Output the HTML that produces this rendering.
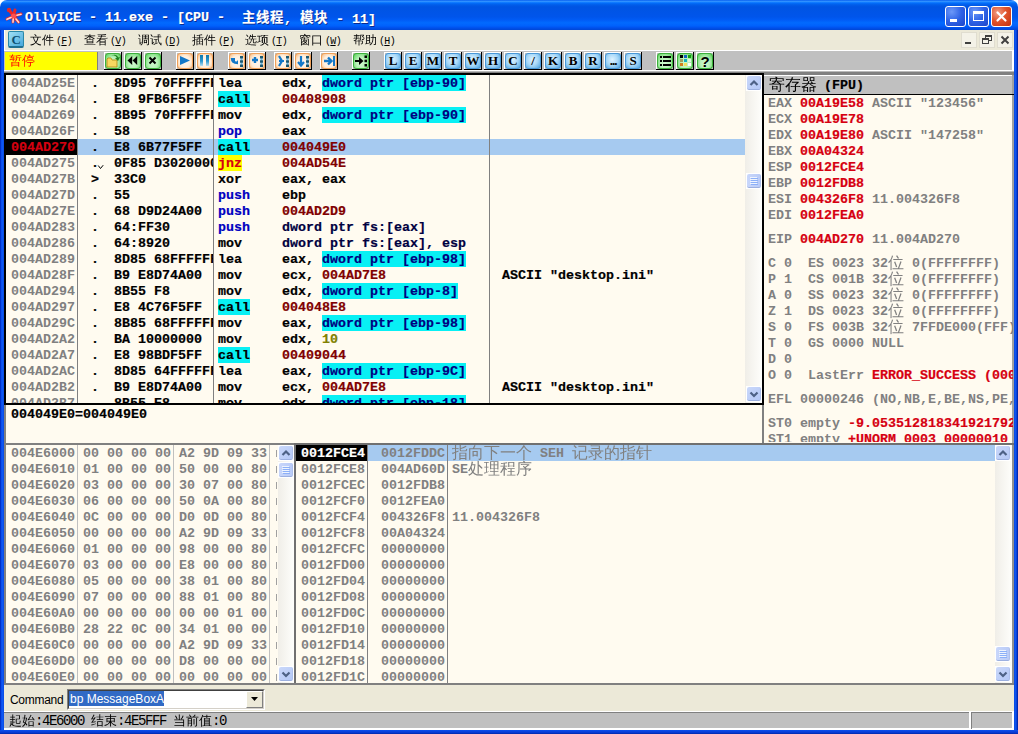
<!DOCTYPE html>
<html><head><meta charset="utf-8"><title>OllyICE</title><style>
html,body{margin:0;padding:0}
body{width:1018px;height:734px;position:relative;overflow:hidden;background:#0A3EDC;font-family:"Liberation Sans","WenQuanYi Zen Hei","Noto Sans CJK SC",sans-serif;font-size:12px;color:#000}
div,span{position:absolute;box-sizing:border-box;white-space:pre}
.m{font-family:"Liberation Mono","WenQuanYi Zen Hei Mono","Noto Sans CJK SC",monospace;font-weight:bold;font-size:13.333px;line-height:18px;height:16px;-webkit-text-stroke:0.2px}
.r{left:0;height:16px;width:100%}
.g{color:#808080;-webkit-text-stroke:0}
.k{color:#000}
.rd{color:#D60010}
.cy{background:#08F0F4}
.nvd{color:#000040}
.nv{color:#000080}
.mr{color:#800000}
.bl{color:#0000C0}
.ol{color:#808000}
.cream{background:#FFFBF0}
.cj{font-family:"WenQuanYi Zen Hei","Noto Sans CJK SC",sans-serif;font-weight:normal}
</style></head><body>
<div style="left:0px;top:0px;width:1018px;height:8px;background:#fff"></div>
<div style="left:0px;top:0px;width:1018px;height:30px;background:linear-gradient(to bottom,#0058EE 0%,#3593FF 4%,#288EFF 6%,#127DFF 8%,#036FFC 10%,#0262EE 14%,#0057E5 20%,#0054E3 24%,#0055EB 56%,#005BF5 66%,#026AFE 76%,#0061FC 86%,#0052EE 92%,#0046D5 100%);border-radius:7px 7px 0 0;"></div>
<svg style="position:absolute;left:0px;top:0px" width="30" height="30" viewBox="0 0 30 30"><g stroke="#E82828" stroke-width="3" stroke-linecap="round" fill="none"><line x1="13.5" y1="16" x2="9.5" y2="10.5"/><line x1="13.5" y1="16" x2="15" y2="10"/><line x1="13.5" y1="16" x2="21" y2="14"/><line x1="13.5" y1="16" x2="18.5" y2="22"/><line x1="13.5" y1="16" x2="13" y2="22"/><line x1="13.5" y1="16" x2="7" y2="19"/></g><circle cx="9" cy="10" r="2.2" fill="#E82828"/><circle cx="13.5" cy="16" r="2.5" fill="#FF5050"/><g stroke="#FFD8D0" stroke-width="1.6" stroke-linecap="round"><line x1="11" y1="17.5" x2="7" y2="19.3"/><line x1="13.2" y1="19" x2="13" y2="22.3"/><line x1="16" y1="19" x2="18.6" y2="22.3"/><line x1="17" y1="15.3" x2="21" y2="14.2"/></g></svg>
<span class="m" style="left:25px;top:9px;color:#fff;text-shadow:1px 1px 0 #0A2A90">OllyICE - 11.exe - [CPU - </span>
<span class="m" style="left:242px;top:9px;color:#fff;text-shadow:1px 1px 0 #0A2A90"><span style="position:relative;top:-1.5px;font-family:'Noto Sans CJK SC',sans-serif;letter-spacing:0.67px">主线程</span>, <span style="position:relative;top:-1.5px;font-family:'Noto Sans CJK SC',sans-serif;letter-spacing:0.67px">模块</span> - 11]</span>
<div style="left:945px;top:6px;width:21px;height:21px;background:radial-gradient(circle at 30% 25%,#6C98F8 0%,#2E62E6 50%,#1B45C8 100%);border:1px solid #fff;border-radius:3px"></div>
<div style="left:968px;top:6px;width:21px;height:21px;background:radial-gradient(circle at 30% 25%,#6C98F8 0%,#2E62E6 50%,#1B45C8 100%);border:1px solid #fff;border-radius:3px"></div>
<div style="left:991px;top:6px;width:21px;height:21px;background:radial-gradient(circle at 30% 30%,#F0A088 0%,#E0542C 45%,#C03010 100%);border:1px solid #fff;border-radius:3px"></div>
<div style="left:950px;top:19px;width:7px;height:3px;background:#fff"></div>
<div style="left:973px;top:11px;width:11px;height:10px;border:1px solid #fff;border-top:3px solid #fff"></div>
<svg style="position:absolute;left:995px;top:10px" width="13" height="13" viewBox="0 0 13 13"><path d="M2.5 2.5 L10.5 10.5 M10.5 2.5 L2.5 10.5" stroke="#fff" stroke-width="2.2" stroke-linecap="round"/></svg>
<div style="left:0px;top:30px;width:1px;height:704px;background:#0030C8"></div>
<div style="left:1px;top:30px;width:3px;height:700px;background:linear-gradient(to right,#0A48E8,#0C58F4,#0A48E0)"></div>
<div style="left:1014px;top:30px;width:3px;height:700px;background:linear-gradient(to right,#0A48E0,#0C54EE,#0838D0)"></div>
<div style="left:1017px;top:30px;width:1px;height:704px;background:#0028B0"></div>
<div style="left:0px;top:730px;width:1018px;height:4px;background:linear-gradient(to bottom,#0C50EC,#0A44E0,#0838D0,#0028A8)"></div>
<div style="left:4px;top:30px;width:1010px;height:21px;background:#ECE9D8"></div>
<div style="left:4px;top:50px;width:1010px;height:1px;background:#fff"></div>
<div style="left:8px;top:31px;width:16px;height:17px;background:linear-gradient(135deg,#A0E0F4,#48A8DC);border:1px solid #2888A8;border-bottom:2px solid #207090;border-radius:2px"></div>
<span class="" style="left:11.5px;top:32px;font-family:'Liberation Serif',serif;font-weight:bold;font-size:13px;line-height:16px;color:#0C5070">C</span>
<span class="cj" style="left:30px;top:33px;font-size:12px;line-height:14px;color:#000">文件<span style="position:static;font-family:'Liberation Mono',monospace;font-size:10px;margin-left:2px;letter-spacing:-0.7px">(<u>F</u>)</span></span>
<span class="cj" style="left:84px;top:33px;font-size:12px;line-height:14px;color:#000">查看<span style="position:static;font-family:'Liberation Mono',monospace;font-size:10px;margin-left:2px;letter-spacing:-0.7px">(<u>V</u>)</span></span>
<span class="cj" style="left:138px;top:33px;font-size:12px;line-height:14px;color:#000">调试<span style="position:static;font-family:'Liberation Mono',monospace;font-size:10px;margin-left:2px;letter-spacing:-0.7px">(<u>D</u>)</span></span>
<span class="cj" style="left:192px;top:33px;font-size:12px;line-height:14px;color:#000">插件<span style="position:static;font-family:'Liberation Mono',monospace;font-size:10px;margin-left:2px;letter-spacing:-0.7px">(<u>P</u>)</span></span>
<span class="cj" style="left:245px;top:33px;font-size:12px;line-height:14px;color:#000">选项<span style="position:static;font-family:'Liberation Mono',monospace;font-size:10px;margin-left:2px;letter-spacing:-0.7px">(<u>T</u>)</span></span>
<span class="cj" style="left:299px;top:33px;font-size:12px;line-height:14px;color:#000">窗口<span style="position:static;font-family:'Liberation Mono',monospace;font-size:10px;margin-left:2px;letter-spacing:-0.7px">(<u>W</u>)</span></span>
<span class="cj" style="left:353px;top:33px;font-size:12px;line-height:14px;color:#000">帮助<span style="position:static;font-family:'Liberation Mono',monospace;font-size:10px;margin-left:2px;letter-spacing:-0.7px">(<u>H</u>)</span></span>
<div style="left:961px;top:32px;width:16px;height:16px;background:#F4F2E8;border:1px solid #E0DDD0"></div>
<div style="left:979px;top:32px;width:16px;height:16px;background:#F4F2E8;border:1px solid #E0DDD0"></div>
<div style="left:997px;top:32px;width:16px;height:16px;background:#F4F2E8;border:1px solid #E0DDD0"></div>
<div style="left:965px;top:42px;width:6px;height:2px;background:#404040"></div>
<div style="left:985px;top:35px;width:7px;height:6px;border:1px solid #404040;border-top:2px solid #404040"></div>
<div style="left:982px;top:38px;width:7px;height:6px;border:1px solid #404040;border-top:2px solid #404040;background:#F4F2E8"></div>
<svg style="position:absolute;left:1000px;top:35px" width="10" height="10" viewBox="0 0 10 10"><path d="M1.5 1.5 L8.5 8.5 M8.5 1.5 L1.5 8.5" stroke="#404040" stroke-width="2"/></svg>
<div style="left:4px;top:30px;width:1px;height:42px;background:#fff"></div>
<div style="left:4px;top:51px;width:1010px;height:19px;background:#C0C0C0"></div>
<div style="left:4px;top:70px;width:1010px;height:1px;background:#fff"></div>
<div style="left:4px;top:71px;width:1010px;height:1px;background:#B8B8B8"></div>
<div style="left:4px;top:72px;width:1010px;height:2px;background:#808080"></div>
<div style="left:5px;top:52px;width:93px;height:18px;background:#FFFF00;border-right:1px solid #808080"></div>
<span class="cj" style="left:9px;top:53px;font-size:13px;line-height:16px;color:#FF0000">暂停</span>
<div style="left:104px;top:52px;width:18px;height:18px;background:#000"></div><div style="left:104px;top:52px;width:17px;height:17px;background:#fff"></div><div style="left:105px;top:53px;width:16px;height:16px;background:#C0C0C0"></div><div style="left:105px;top:53px;width:16px;height:16px;background:radial-gradient(ellipse at 50% 65%,#D0F8D0 0%,#B8F2B8 45%,#7CDC7C 80%,#50C450 100%);border:1px solid #3CB03C;border-radius:3px"></div><svg style="position:absolute;left:105px;top:53px" width="16" height="16" viewBox="0 0 16 16"><path d="M2 6 L2 14 L12 14 L12 7 L7 7 L6 5 L3 5 Z" fill="#F8D860" stroke="#B89820" stroke-width="1"/><path d="M6 3 Q10 1 12 5 L10 5 L13 8 L15 4 L13.5 4.5 Q11 0 6 3 Z" fill="#208020"/></svg><div style="left:124px;top:52px;width:18px;height:18px;background:#000"></div><div style="left:124px;top:52px;width:17px;height:17px;background:#fff"></div><div style="left:125px;top:53px;width:16px;height:16px;background:#C0C0C0"></div><div style="left:125px;top:53px;width:16px;height:16px;background:radial-gradient(ellipse at 50% 65%,#D0F8D0 0%,#B8F2B8 45%,#7CDC7C 80%,#50C450 100%);border:1px solid #3CB03C;border-radius:3px"></div><svg style="position:absolute;left:125px;top:53px" width="16" height="16" viewBox="0 0 16 16"><path d="M7.2 3 L7.2 12 L2.5 7.5 Z M12.2 3 L12.2 12 L7.5 7.5 Z" fill="#000"/></svg><div style="left:144px;top:52px;width:18px;height:18px;background:#000"></div><div style="left:144px;top:52px;width:17px;height:17px;background:#fff"></div><div style="left:145px;top:53px;width:16px;height:16px;background:#C0C0C0"></div><div style="left:145px;top:53px;width:16px;height:16px;background:radial-gradient(ellipse at 50% 65%,#D0F8D0 0%,#B8F2B8 45%,#7CDC7C 80%,#50C450 100%);border:1px solid #3CB03C;border-radius:3px"></div><svg style="position:absolute;left:145px;top:53px" width="16" height="16" viewBox="0 0 16 16"><path d="M4.5 4.5 L10.5 10.5 M10.5 4.5 L4.5 10.5" stroke="#000" stroke-width="2"/></svg><div style="left:176px;top:52px;width:18px;height:18px;background:#000"></div><div style="left:176px;top:52px;width:17px;height:17px;background:#fff"></div><div style="left:177px;top:53px;width:16px;height:16px;background:#C0C0C0"></div><div style="left:177px;top:53px;width:16px;height:16px;background:radial-gradient(ellipse at 50% 55%,#FFF8F0 0%,#FFEEDC 55%,#FBCB9C 85%,#F5A862 100%);border:1px solid #F0A058;border-radius:3px"></div><svg style="position:absolute;left:177px;top:53px" width="16" height="16" viewBox="0 0 16 16"><path d="M3 3 L13 7.5 L3 12 Z" fill="#1478C8"/></svg><div style="left:196px;top:52px;width:18px;height:18px;background:#000"></div><div style="left:196px;top:52px;width:17px;height:17px;background:#fff"></div><div style="left:197px;top:53px;width:16px;height:16px;background:#C0C0C0"></div><div style="left:197px;top:53px;width:16px;height:16px;background:radial-gradient(ellipse at 50% 55%,#FFF8F0 0%,#FFEEDC 55%,#FBCB9C 85%,#F5A862 100%);border:1px solid #F0A058;border-radius:3px"></div><svg style="position:absolute;left:197px;top:53px" width="16" height="16" viewBox="0 0 16 16"><defs><linearGradient id="pg" x1="0" y1="0" x2="0" y2="1"><stop offset="0" stop-color="#0E78AC"/><stop offset="0.55" stop-color="#2C98D0"/><stop offset="1" stop-color="#BCE0F0"/></linearGradient></defs><rect x="3" y="2" width="3" height="11" fill="url(#pg)"/><rect x="9" y="2" width="3" height="11" fill="url(#pg)"/></svg><div style="left:228px;top:52px;width:18px;height:18px;background:#000"></div><div style="left:228px;top:52px;width:17px;height:17px;background:#fff"></div><div style="left:229px;top:53px;width:16px;height:16px;background:#C0C0C0"></div><div style="left:229px;top:53px;width:16px;height:16px;background:radial-gradient(ellipse at 50% 55%,#FFF8F0 0%,#FFEEDC 55%,#FBCB9C 85%,#F5A862 100%);border:1px solid #F0A058;border-radius:3px"></div><svg style="position:absolute;left:229px;top:53px" width="16" height="16" viewBox="0 0 16 16"><path d="M3 4 L6 4 L6 8 L9 8 L9 6 L6 9.5 L3 6 Z" fill="#1478C8" transform="translate(0,1)"/><path d="M3 5 Q3 10 9 10" stroke="#1478C8" stroke-width="2.5" fill="none"/><rect x="11.5" y="3" width="2" height="10" fill="#6CB8E4"/><rect x="11" y="3" width="3" height="2.4" fill="#1C5870"/><rect x="11" y="7.3" width="3" height="2.4" fill="#1C5870"/><rect x="11" y="11.6" width="3" height="2.4" fill="#1C5870"/></svg><div style="left:248px;top:52px;width:18px;height:18px;background:#000"></div><div style="left:248px;top:52px;width:17px;height:17px;background:#fff"></div><div style="left:249px;top:53px;width:16px;height:16px;background:#C0C0C0"></div><div style="left:249px;top:53px;width:16px;height:16px;background:radial-gradient(ellipse at 50% 55%,#FFF8F0 0%,#FFEEDC 55%,#FBCB9C 85%,#F5A862 100%);border:1px solid #F0A058;border-radius:3px"></div><svg style="position:absolute;left:249px;top:53px" width="16" height="16" viewBox="0 0 16 16"><path d="M3 7 L9 7 M6 4 L6 10" stroke="#1478C8" stroke-width="2.4"/><rect x="11.5" y="3" width="2" height="10" fill="#6CB8E4"/><rect x="11" y="3" width="3" height="2.4" fill="#1C5870"/><rect x="11" y="7.3" width="3" height="2.4" fill="#1C5870"/><rect x="11" y="11.6" width="3" height="2.4" fill="#1C5870"/></svg><div style="left:274px;top:52px;width:18px;height:18px;background:#000"></div><div style="left:274px;top:52px;width:17px;height:17px;background:#fff"></div><div style="left:275px;top:53px;width:16px;height:16px;background:#C0C0C0"></div><div style="left:275px;top:53px;width:16px;height:16px;background:radial-gradient(ellipse at 50% 55%,#FFF8F0 0%,#FFEEDC 55%,#FBCB9C 85%,#F5A862 100%);border:1px solid #F0A058;border-radius:3px"></div><svg style="position:absolute;left:275px;top:53px" width="16" height="16" viewBox="0 0 16 16"><path d="M4 3 L7 8 L4 13 M4 8 L9 8" stroke="#1478C8" stroke-width="2.2" fill="none"/><rect x="11.5" y="3" width="2" height="10" fill="#6CB8E4"/><rect x="11" y="3" width="3" height="2.4" fill="#1C5870"/><rect x="11" y="7.3" width="3" height="2.4" fill="#1C5870"/><rect x="11" y="11.6" width="3" height="2.4" fill="#1C5870"/></svg><div style="left:294px;top:52px;width:18px;height:18px;background:#000"></div><div style="left:294px;top:52px;width:17px;height:17px;background:#fff"></div><div style="left:295px;top:53px;width:16px;height:16px;background:#C0C0C0"></div><div style="left:295px;top:53px;width:16px;height:16px;background:radial-gradient(ellipse at 50% 55%,#FFF8F0 0%,#FFEEDC 55%,#FBCB9C 85%,#F5A862 100%);border:1px solid #F0A058;border-radius:3px"></div><svg style="position:absolute;left:295px;top:53px" width="16" height="16" viewBox="0 0 16 16"><path d="M6 3 L6 12 M3 9 L6 12.5 L9 9" stroke="#1478C8" stroke-width="2.2" fill="none"/><rect x="11.5" y="3" width="2" height="10" fill="#6CB8E4"/><rect x="11" y="3" width="3" height="2.4" fill="#1C5870"/><rect x="11" y="7.3" width="3" height="2.4" fill="#1C5870"/><rect x="11" y="11.6" width="3" height="2.4" fill="#1C5870"/></svg><div style="left:320px;top:52px;width:18px;height:18px;background:#000"></div><div style="left:320px;top:52px;width:17px;height:17px;background:#fff"></div><div style="left:321px;top:53px;width:16px;height:16px;background:#C0C0C0"></div><div style="left:321px;top:53px;width:16px;height:16px;background:radial-gradient(ellipse at 50% 55%,#FFF8F0 0%,#FFEEDC 55%,#FBCB9C 85%,#F5A862 100%);border:1px solid #F0A058;border-radius:3px"></div><svg style="position:absolute;left:321px;top:53px" width="16" height="16" viewBox="0 0 16 16"><path d="M3 8 L10 8 M7 4.5 L10.5 8 L7 11.5" stroke="#1478C8" stroke-width="2.4" fill="none"/><rect x="12" y="3" width="2" height="10" fill="#1478C8"/></svg><div style="left:352px;top:52px;width:18px;height:18px;background:#000"></div><div style="left:352px;top:52px;width:17px;height:17px;background:#fff"></div><div style="left:353px;top:53px;width:16px;height:16px;background:#C0C0C0"></div><div style="left:353px;top:53px;width:16px;height:16px;background:radial-gradient(ellipse at 50% 65%,#D0F8D0 0%,#B8F2B8 45%,#7CDC7C 80%,#50C450 100%);border:1px solid #3CB03C;border-radius:3px"></div><svg style="position:absolute;left:353px;top:53px" width="16" height="16" viewBox="0 0 16 16"><path d="M2 8 L8 8" stroke="#000" stroke-width="2"/><path d="M6 4 L10.5 8 L6 12 Z" fill="#000"/><rect x="11.5" y="2.5" width="2.5" height="2.5" fill="#000"/><rect x="11.5" y="6.7" width="2.5" height="2.5" fill="#000"/><rect x="11.5" y="11" width="2.5" height="2.5" fill="#000"/></svg><div style="left:384px;top:52px;width:18px;height:18px;background:#000"></div><div style="left:384px;top:52px;width:17px;height:17px;background:#fff"></div><div style="left:385px;top:53px;width:16px;height:16px;background:#C0C0C0"></div><div style="left:385px;top:53px;width:16px;height:16px;background:radial-gradient(ellipse at 45% 40%,#DFF3FF 0%,#A8D8F8 50%,#4FA4E0 100%);border:1px solid #4898D8;border-radius:3px"></div><span style="left:385px;top:53px;width:16px;height:16px;text-align:center;font-family:'Liberation Serif',serif;font-weight:bold;font-size:13px;line-height:15px;color:#000;letter-spacing:0px">L</span><div style="left:404px;top:52px;width:18px;height:18px;background:#000"></div><div style="left:404px;top:52px;width:17px;height:17px;background:#fff"></div><div style="left:405px;top:53px;width:16px;height:16px;background:#C0C0C0"></div><div style="left:405px;top:53px;width:16px;height:16px;background:radial-gradient(ellipse at 45% 40%,#DFF3FF 0%,#A8D8F8 50%,#4FA4E0 100%);border:1px solid #4898D8;border-radius:3px"></div><span style="left:405px;top:53px;width:16px;height:16px;text-align:center;font-family:'Liberation Serif',serif;font-weight:bold;font-size:13px;line-height:15px;color:#000;letter-spacing:0px">E</span><div style="left:424px;top:52px;width:18px;height:18px;background:#000"></div><div style="left:424px;top:52px;width:17px;height:17px;background:#fff"></div><div style="left:425px;top:53px;width:16px;height:16px;background:#C0C0C0"></div><div style="left:425px;top:53px;width:16px;height:16px;background:radial-gradient(ellipse at 45% 40%,#DFF3FF 0%,#A8D8F8 50%,#4FA4E0 100%);border:1px solid #4898D8;border-radius:3px"></div><span style="left:425px;top:53px;width:16px;height:16px;text-align:center;font-family:'Liberation Serif',serif;font-weight:bold;font-size:13px;line-height:15px;color:#000;letter-spacing:0px">M</span><div style="left:444px;top:52px;width:18px;height:18px;background:#000"></div><div style="left:444px;top:52px;width:17px;height:17px;background:#fff"></div><div style="left:445px;top:53px;width:16px;height:16px;background:#C0C0C0"></div><div style="left:445px;top:53px;width:16px;height:16px;background:radial-gradient(ellipse at 45% 40%,#DFF3FF 0%,#A8D8F8 50%,#4FA4E0 100%);border:1px solid #4898D8;border-radius:3px"></div><span style="left:445px;top:53px;width:16px;height:16px;text-align:center;font-family:'Liberation Serif',serif;font-weight:bold;font-size:13px;line-height:15px;color:#000;letter-spacing:0px">T</span><div style="left:464px;top:52px;width:18px;height:18px;background:#000"></div><div style="left:464px;top:52px;width:17px;height:17px;background:#fff"></div><div style="left:465px;top:53px;width:16px;height:16px;background:#C0C0C0"></div><div style="left:465px;top:53px;width:16px;height:16px;background:radial-gradient(ellipse at 45% 40%,#DFF3FF 0%,#A8D8F8 50%,#4FA4E0 100%);border:1px solid #4898D8;border-radius:3px"></div><span style="left:465px;top:53px;width:16px;height:16px;text-align:center;font-family:'Liberation Serif',serif;font-weight:bold;font-size:13px;line-height:15px;color:#000;letter-spacing:0px">W</span><div style="left:484px;top:52px;width:18px;height:18px;background:#000"></div><div style="left:484px;top:52px;width:17px;height:17px;background:#fff"></div><div style="left:485px;top:53px;width:16px;height:16px;background:#C0C0C0"></div><div style="left:485px;top:53px;width:16px;height:16px;background:radial-gradient(ellipse at 45% 40%,#DFF3FF 0%,#A8D8F8 50%,#4FA4E0 100%);border:1px solid #4898D8;border-radius:3px"></div><span style="left:485px;top:53px;width:16px;height:16px;text-align:center;font-family:'Liberation Serif',serif;font-weight:bold;font-size:13px;line-height:15px;color:#000;letter-spacing:0px">H</span><div style="left:504px;top:52px;width:18px;height:18px;background:#000"></div><div style="left:504px;top:52px;width:17px;height:17px;background:#fff"></div><div style="left:505px;top:53px;width:16px;height:16px;background:#C0C0C0"></div><div style="left:505px;top:53px;width:16px;height:16px;background:radial-gradient(ellipse at 45% 40%,#DFF3FF 0%,#A8D8F8 50%,#4FA4E0 100%);border:1px solid #4898D8;border-radius:3px"></div><span style="left:505px;top:53px;width:16px;height:16px;text-align:center;font-family:'Liberation Serif',serif;font-weight:bold;font-size:13px;line-height:15px;color:#000;letter-spacing:0px">C</span><div style="left:524px;top:52px;width:18px;height:18px;background:#000"></div><div style="left:524px;top:52px;width:17px;height:17px;background:#fff"></div><div style="left:525px;top:53px;width:16px;height:16px;background:#C0C0C0"></div><div style="left:525px;top:53px;width:16px;height:16px;background:radial-gradient(ellipse at 45% 40%,#DFF3FF 0%,#A8D8F8 50%,#4FA4E0 100%);border:1px solid #4898D8;border-radius:3px"></div><span style="left:525px;top:53px;width:16px;height:16px;text-align:center;font-family:'Liberation Serif',serif;font-weight:bold;font-size:13px;line-height:15px;color:#000;letter-spacing:0px">/</span><div style="left:544px;top:52px;width:18px;height:18px;background:#000"></div><div style="left:544px;top:52px;width:17px;height:17px;background:#fff"></div><div style="left:545px;top:53px;width:16px;height:16px;background:#C0C0C0"></div><div style="left:545px;top:53px;width:16px;height:16px;background:radial-gradient(ellipse at 45% 40%,#DFF3FF 0%,#A8D8F8 50%,#4FA4E0 100%);border:1px solid #4898D8;border-radius:3px"></div><span style="left:545px;top:53px;width:16px;height:16px;text-align:center;font-family:'Liberation Serif',serif;font-weight:bold;font-size:13px;line-height:15px;color:#000;letter-spacing:0px">K</span><div style="left:564px;top:52px;width:18px;height:18px;background:#000"></div><div style="left:564px;top:52px;width:17px;height:17px;background:#fff"></div><div style="left:565px;top:53px;width:16px;height:16px;background:#C0C0C0"></div><div style="left:565px;top:53px;width:16px;height:16px;background:radial-gradient(ellipse at 45% 40%,#DFF3FF 0%,#A8D8F8 50%,#4FA4E0 100%);border:1px solid #4898D8;border-radius:3px"></div><span style="left:565px;top:53px;width:16px;height:16px;text-align:center;font-family:'Liberation Serif',serif;font-weight:bold;font-size:13px;line-height:15px;color:#000;letter-spacing:0px">B</span><div style="left:584px;top:52px;width:18px;height:18px;background:#000"></div><div style="left:584px;top:52px;width:17px;height:17px;background:#fff"></div><div style="left:585px;top:53px;width:16px;height:16px;background:#C0C0C0"></div><div style="left:585px;top:53px;width:16px;height:16px;background:radial-gradient(ellipse at 45% 40%,#DFF3FF 0%,#A8D8F8 50%,#4FA4E0 100%);border:1px solid #4898D8;border-radius:3px"></div><span style="left:585px;top:53px;width:16px;height:16px;text-align:center;font-family:'Liberation Serif',serif;font-weight:bold;font-size:13px;line-height:15px;color:#000;letter-spacing:0px">R</span><div style="left:604px;top:52px;width:18px;height:18px;background:#000"></div><div style="left:604px;top:52px;width:17px;height:17px;background:#fff"></div><div style="left:605px;top:53px;width:16px;height:16px;background:#C0C0C0"></div><div style="left:605px;top:53px;width:16px;height:16px;background:radial-gradient(ellipse at 45% 40%,#DFF3FF 0%,#A8D8F8 50%,#4FA4E0 100%);border:1px solid #4898D8;border-radius:3px"></div><span style="left:605px;top:53px;width:16px;height:16px;text-align:center;font-family:'Liberation Serif',serif;font-weight:bold;font-size:13px;line-height:15px;color:#000;letter-spacing:-1px">...</span><div style="left:624px;top:52px;width:18px;height:18px;background:#000"></div><div style="left:624px;top:52px;width:17px;height:17px;background:#fff"></div><div style="left:625px;top:53px;width:16px;height:16px;background:#C0C0C0"></div><div style="left:625px;top:53px;width:16px;height:16px;background:radial-gradient(ellipse at 45% 40%,#DFF3FF 0%,#A8D8F8 50%,#4FA4E0 100%);border:1px solid #4898D8;border-radius:3px"></div><span style="left:625px;top:53px;width:16px;height:16px;text-align:center;font-family:'Liberation Serif',serif;font-weight:bold;font-size:13px;line-height:15px;color:#000;letter-spacing:0px">S</span><div style="left:656px;top:52px;width:18px;height:18px;background:#000"></div><div style="left:656px;top:52px;width:17px;height:17px;background:#fff"></div><div style="left:657px;top:53px;width:16px;height:16px;background:#C0C0C0"></div><div style="left:657px;top:53px;width:16px;height:16px;background:radial-gradient(ellipse at 50% 65%,#D0F8D0 0%,#B8F2B8 45%,#7CDC7C 80%,#50C450 100%);border:1px solid #3CB03C;border-radius:3px"></div><svg style="position:absolute;left:657px;top:53px" width="16" height="16" viewBox="0 0 16 16"><rect x="3" y="3" width="2" height="2" fill="#000"/><rect x="6" y="3" width="8" height="2" fill="#000"/><rect x="3" y="7" width="2" height="2" fill="#000"/><rect x="6" y="7" width="8" height="2" fill="#000"/><rect x="3" y="11" width="2" height="2" fill="#000"/><rect x="6" y="11" width="8" height="2" fill="#000"/></svg><div style="left:676px;top:52px;width:18px;height:18px;background:#000"></div><div style="left:676px;top:52px;width:17px;height:17px;background:#fff"></div><div style="left:677px;top:53px;width:16px;height:16px;background:#C0C0C0"></div><div style="left:677px;top:53px;width:16px;height:16px;background:radial-gradient(ellipse at 50% 65%,#D0F8D0 0%,#B8F2B8 45%,#7CDC7C 80%,#50C450 100%);border:1px solid #3CB03C;border-radius:3px"></div><svg style="position:absolute;left:677px;top:53px" width="16" height="16" viewBox="0 0 16 16"><rect x="3" y="2" width="3" height="3" fill="#000"/><rect x="7" y="2" width="3" height="3" fill="#1060C0"/><rect x="11" y="2" width="3" height="3" fill="#10A010"/><rect x="3" y="6" width="3" height="3" fill="#A0A060"/><rect x="7" y="6" width="3" height="3" fill="#10B0C0"/><rect x="11" y="6" width="3" height="3" fill="#E0F8E0"/><rect x="3" y="10" width="3" height="3" fill="#D08020"/><rect x="7" y="10" width="3" height="3" fill="#F0E060"/><rect x="11" y="10" width="3" height="3" fill="#FFFFFF"/></svg><div style="left:696px;top:52px;width:18px;height:18px;background:#000"></div><div style="left:696px;top:52px;width:17px;height:17px;background:#fff"></div><div style="left:697px;top:53px;width:16px;height:16px;background:#C0C0C0"></div><div style="left:697px;top:53px;width:16px;height:16px;background:radial-gradient(ellipse at 50% 65%,#D0F8D0 0%,#B8F2B8 45%,#7CDC7C 80%,#50C450 100%);border:1px solid #3CB03C;border-radius:3px"></div><span style="left:697px;top:53px;width:16px;height:16px;text-align:center;font-family:'Liberation Sans',sans-serif;font-weight:bold;font-size:15px;line-height:17px;color:#000">?</span>
<div style="left:1012px;top:51px;width:2px;height:19px;background:#fff"></div>
<div style="left:4px;top:74px;width:1010px;height:611px;background:#C0C0C0"></div>
<div style="left:4px;top:73px;width:760px;height:332px;background:#000"></div>
<div class="cream" style="left:6px;top:75px;width:756px;height:328px;"></div>
<div id="dis" style="left:6px;top:75px;width:739px;height:328px;overflow:hidden">
<span class="m g" style="left:5px;top:0px;">004AD25E</span>
<span class="m k" style="left:85px;top:0px;">.</span>
<span class="m k" style="left:108px;top:0px;width:99px;overflow:hidden">8D95 70FFFFFF</span>
<span class="m k" style="left:212px;top:0px;">lea</span>
<span class="m k" style="left:276px;top:0px;">edx, </span>
<span class="m nv" style="left:316px;top:0px;background:#08F0F4">dword ptr [ebp-90]</span>
<span class="m g" style="left:5px;top:16px;">004AD264</span>
<span class="m k" style="left:85px;top:16px;">.</span>
<span class="m k" style="left:108px;top:16px;width:99px;overflow:hidden">E8 9FB6F5FF</span>
<span class="m k" style="left:212px;top:16px;background:#08F0F4">call</span>
<span class="m mr" style="left:276px;top:16px;">00408908</span>
<span class="m g" style="left:5px;top:32px;">004AD269</span>
<span class="m k" style="left:85px;top:32px;">.</span>
<span class="m k" style="left:108px;top:32px;width:99px;overflow:hidden">8B95 70FFFFFF</span>
<span class="m k" style="left:212px;top:32px;">mov</span>
<span class="m k" style="left:276px;top:32px;">edx, </span>
<span class="m nv" style="left:316px;top:32px;background:#08F0F4">dword ptr [ebp-90]</span>
<span class="m g" style="left:5px;top:48px;">004AD26F</span>
<span class="m k" style="left:85px;top:48px;">.</span>
<span class="m k" style="left:108px;top:48px;width:99px;overflow:hidden">58</span>
<span class="m bl" style="left:212px;top:48px;">pop</span>
<span class="m k" style="left:276px;top:48px;">eax</span>
<div style="left:0px;top:64px;width:740px;height:16px;background:#A6CAF0"></div>
<div style="left:0px;top:64px;width:71px;height:16px;background:#000"></div>
<span class="m rd" style="left:5px;top:64px;">004AD270</span>
<span class="m k" style="left:85px;top:64px;">.</span>
<span class="m k" style="left:108px;top:64px;width:99px;overflow:hidden">E8 6B77F5FF</span>
<span class="m k" style="left:212px;top:64px;background:#08F0F4">call</span>
<span class="m mr" style="left:276px;top:64px;">004049E0</span>
<span class="m g" style="left:5px;top:80px;">004AD275</span>
<span class="m k" style="left:85px;top:80px;">.</span>
<svg style="position:absolute;left:91px;top:89px" width="8" height="6" viewBox="0 0 8 6"><path d="M1.2 1.5 L3.5 4.5 L6.2 1.2" stroke="#000" stroke-width="1" fill="none"/></svg>
<span class="m k" style="left:108px;top:80px;width:99px;overflow:hidden">0F85 D3020000</span>
<span class="m rd" style="left:212px;top:80px;background:#FFFF00">jnz</span>
<span class="m mr" style="left:276px;top:80px;">004AD54E</span>
<span class="m g" style="left:5px;top:96px;">004AD27B</span>
<span class="m k" style="left:85px;top:96px;">&gt;</span>
<span class="m k" style="left:108px;top:96px;width:99px;overflow:hidden">33C0</span>
<span class="m k" style="left:212px;top:96px;">xor</span>
<span class="m k" style="left:276px;top:96px;">eax, eax</span>
<span class="m g" style="left:5px;top:112px;">004AD27D</span>
<span class="m k" style="left:85px;top:112px;">.</span>
<span class="m k" style="left:108px;top:112px;width:99px;overflow:hidden">55</span>
<span class="m bl" style="left:212px;top:112px;">push</span>
<span class="m k" style="left:276px;top:112px;">ebp</span>
<span class="m g" style="left:5px;top:128px;">004AD27E</span>
<span class="m k" style="left:85px;top:128px;">.</span>
<span class="m k" style="left:108px;top:128px;width:99px;overflow:hidden">68 D9D24A00</span>
<span class="m bl" style="left:212px;top:128px;">push</span>
<span class="m mr" style="left:276px;top:128px;">004AD2D9</span>
<span class="m g" style="left:5px;top:144px;">004AD283</span>
<span class="m k" style="left:85px;top:144px;">.</span>
<span class="m k" style="left:108px;top:144px;width:99px;overflow:hidden">64:FF30</span>
<span class="m bl" style="left:212px;top:144px;">push</span>
<span class="m nvd" style="left:276px;top:144px;">dword ptr fs:[eax]</span>
<span class="m g" style="left:5px;top:160px;">004AD286</span>
<span class="m k" style="left:85px;top:160px;">.</span>
<span class="m k" style="left:108px;top:160px;width:99px;overflow:hidden">64:8920</span>
<span class="m k" style="left:212px;top:160px;">mov</span>
<span class="m nvd" style="left:276px;top:160px;">dword ptr fs:[eax], esp</span>
<span class="m g" style="left:5px;top:176px;">004AD289</span>
<span class="m k" style="left:85px;top:176px;">.</span>
<span class="m k" style="left:108px;top:176px;width:99px;overflow:hidden">8D85 68FFFFFF</span>
<span class="m k" style="left:212px;top:176px;">lea</span>
<span class="m k" style="left:276px;top:176px;">eax, </span>
<span class="m nv" style="left:316px;top:176px;background:#08F0F4">dword ptr [ebp-98]</span>
<span class="m g" style="left:5px;top:192px;">004AD28F</span>
<span class="m k" style="left:85px;top:192px;">.</span>
<span class="m k" style="left:108px;top:192px;width:99px;overflow:hidden">B9 E8D74A00</span>
<span class="m k" style="left:212px;top:192px;">mov</span>
<span class="m k" style="left:276px;top:192px;">ecx, </span>
<span class="m mr" style="left:316px;top:192px;">004AD7E8</span>
<span class="m k" style="left:496px;top:192px;">ASCII "desktop.ini"</span>
<span class="m g" style="left:5px;top:208px;">004AD294</span>
<span class="m k" style="left:85px;top:208px;">.</span>
<span class="m k" style="left:108px;top:208px;width:99px;overflow:hidden">8B55 F8</span>
<span class="m k" style="left:212px;top:208px;">mov</span>
<span class="m k" style="left:276px;top:208px;">edx, </span>
<span class="m nv" style="left:316px;top:208px;background:#08F0F4">dword ptr [ebp-8]</span>
<span class="m g" style="left:5px;top:224px;">004AD297</span>
<span class="m k" style="left:85px;top:224px;">.</span>
<span class="m k" style="left:108px;top:224px;width:99px;overflow:hidden">E8 4C76F5FF</span>
<span class="m k" style="left:212px;top:224px;background:#08F0F4">call</span>
<span class="m mr" style="left:276px;top:224px;">004048E8</span>
<span class="m g" style="left:5px;top:240px;">004AD29C</span>
<span class="m k" style="left:85px;top:240px;">.</span>
<span class="m k" style="left:108px;top:240px;width:99px;overflow:hidden">8B85 68FFFFFF</span>
<span class="m k" style="left:212px;top:240px;">mov</span>
<span class="m k" style="left:276px;top:240px;">eax, </span>
<span class="m nv" style="left:316px;top:240px;background:#08F0F4">dword ptr [ebp-98]</span>
<span class="m g" style="left:5px;top:256px;">004AD2A2</span>
<span class="m k" style="left:85px;top:256px;">.</span>
<span class="m k" style="left:108px;top:256px;width:99px;overflow:hidden">BA 10000000</span>
<span class="m k" style="left:212px;top:256px;">mov</span>
<span class="m k" style="left:276px;top:256px;">edx, </span>
<span class="m ol" style="left:316px;top:256px;">10</span>
<span class="m g" style="left:5px;top:272px;">004AD2A7</span>
<span class="m k" style="left:85px;top:272px;">.</span>
<span class="m k" style="left:108px;top:272px;width:99px;overflow:hidden">E8 98BDF5FF</span>
<span class="m k" style="left:212px;top:272px;background:#08F0F4">call</span>
<span class="m mr" style="left:276px;top:272px;">00409044</span>
<span class="m g" style="left:5px;top:288px;">004AD2AC</span>
<span class="m k" style="left:85px;top:288px;">.</span>
<span class="m k" style="left:108px;top:288px;width:99px;overflow:hidden">8D85 64FFFFFF</span>
<span class="m k" style="left:212px;top:288px;">lea</span>
<span class="m k" style="left:276px;top:288px;">eax, </span>
<span class="m nv" style="left:316px;top:288px;background:#08F0F4">dword ptr [ebp-9C]</span>
<span class="m g" style="left:5px;top:304px;">004AD2B2</span>
<span class="m k" style="left:85px;top:304px;">.</span>
<span class="m k" style="left:108px;top:304px;width:99px;overflow:hidden">B9 E8D74A00</span>
<span class="m k" style="left:212px;top:304px;">mov</span>
<span class="m k" style="left:276px;top:304px;">ecx, </span>
<span class="m mr" style="left:316px;top:304px;">004AD7E8</span>
<span class="m k" style="left:496px;top:304px;">ASCII "desktop.ini"</span>
<span class="m g" style="left:5px;top:320px;">004AD2B7</span>
<span class="m k" style="left:85px;top:320px;">.</span>
<span class="m k" style="left:108px;top:320px;width:99px;overflow:hidden">8B55 E8</span>
<span class="m k" style="left:212px;top:320px;">mov</span>
<span class="m k" style="left:276px;top:320px;">edx, </span>
<span class="m nv" style="left:316px;top:320px;background:#08F0F4">dword ptr [ebp-18]</span>
<div style="left:71px;top:0px;width:1px;height:329px;background:#808080"></div>
<div style="left:207px;top:0px;width:1px;height:329px;background:#808080"></div>
<div style="left:483px;top:0px;width:1px;height:329px;background:#808080"></div>
</div>
<div style="left:745px;top:75px;width:17px;height:328px;background:linear-gradient(to right,#F0EEE8,#FEFEFB)"></div>
<div style="left:4px;top:405px;width:760px;height:40px;background:#808080"></div>
<div class="cream" style="left:6px;top:405px;width:756px;height:38px;"></div>
<span class="m k" style="left:11px;top:406px;">004049E0=004049E0</span>
<div style="left:764px;top:72px;width:250px;height:372px;background:#808080"></div>
<div class="cream" style="left:764px;top:75px;width:250px;height:368px;"></div>
<div style="left:764px;top:75px;width:250px;height:19px;background:#C0C0C0;border-top:1px solid #fff"></div>
<div style="left:1012px;top:75px;width:2px;height:368px;background:#A0A0A0"></div>
<div style="left:764px;top:94px;width:250px;height:1px;background:#000"></div>
<span class="cj" style="left:769px;top:76px;font-size:16px;line-height:18px;color:#000">寄存器</span>
<span class="m k" style="left:824px;top:77px;">(FPU)</span>
<div style="left:766px;top:95px;width:247px;height:347px;overflow:hidden">
<span class="m g" style="left:2px;top:0px;">EAX</span>
<span class="m rd" style="left:34px;top:0px;">00A19E58</span>
<span class="m g" style="left:106px;top:0px;">ASCII "123456"</span>
<span class="m g" style="left:2px;top:16px;">ECX</span>
<span class="m rd" style="left:34px;top:16px;">00A19E78</span>
<span class="m g" style="left:2px;top:32px;">EDX</span>
<span class="m rd" style="left:34px;top:32px;">00A19E80</span>
<span class="m g" style="left:106px;top:32px;">ASCII "147258"</span>
<span class="m g" style="left:2px;top:48px;">EBX</span>
<span class="m rd" style="left:34px;top:48px;">00A04324</span>
<span class="m g" style="left:2px;top:64px;">ESP</span>
<span class="m rd" style="left:34px;top:64px;">0012FCE4</span>
<span class="m g" style="left:2px;top:80px;">EBP</span>
<span class="m rd" style="left:34px;top:80px;">0012FDB8</span>
<span class="m g" style="left:2px;top:96px;">ESI</span>
<span class="m rd" style="left:34px;top:96px;">004326F8</span>
<span class="m g" style="left:106px;top:96px;">11.004326F8</span>
<span class="m g" style="left:2px;top:112px;">EDI</span>
<span class="m rd" style="left:34px;top:112px;">0012FEA0</span>
<span class="m g" style="left:2px;top:136px;">EIP</span>
<span class="m rd" style="left:34px;top:136px;">004AD270</span>
<span class="m g" style="left:106px;top:136px;">11.004AD270</span>
<span class="m g" style="left:2px;top:160px;">C 0</span>
<span class="m g" style="left:42px;top:160px;">ES 0023 32</span>
<span class="cj g" style="left:122px;top:160px;font-size:16px;line-height:16px">位</span>
<span class="m g" style="left:138px;top:160px;"> 0(FFFFFFFF)</span>
<span class="m g" style="left:2px;top:176px;">P 1</span>
<span class="m g" style="left:42px;top:176px;">CS 001B 32</span>
<span class="cj g" style="left:122px;top:176px;font-size:16px;line-height:16px">位</span>
<span class="m g" style="left:138px;top:176px;"> 0(FFFFFFFF)</span>
<span class="m g" style="left:2px;top:192px;">A 0</span>
<span class="m g" style="left:42px;top:192px;">SS 0023 32</span>
<span class="cj g" style="left:122px;top:192px;font-size:16px;line-height:16px">位</span>
<span class="m g" style="left:138px;top:192px;"> 0(FFFFFFFF)</span>
<span class="m g" style="left:2px;top:208px;">Z 1</span>
<span class="m g" style="left:42px;top:208px;">DS 0023 32</span>
<span class="cj g" style="left:122px;top:208px;font-size:16px;line-height:16px">位</span>
<span class="m g" style="left:138px;top:208px;"> 0(FFFFFFFF)</span>
<span class="m g" style="left:2px;top:224px;">S 0</span>
<span class="m g" style="left:42px;top:224px;">FS 003B 32</span>
<span class="cj g" style="left:122px;top:224px;font-size:16px;line-height:16px">位</span>
<span class="m g" style="left:138px;top:224px;"> 7FFDE000(FFF)</span>
<span class="m g" style="left:2px;top:240px;">T 0</span>
<span class="m g" style="left:42px;top:240px;">GS 0000 NULL</span>
<span class="m g" style="left:2px;top:256px;">D 0</span>
<span class="m g" style="left:2px;top:272px;">O 0</span>
<span class="m g" style="left:42px;top:272px;">LastErr </span>
<span class="m rd" style="left:106px;top:272px;">ERROR_SUCCESS (00000000)</span>
<span class="m g" style="left:2px;top:296px;">EFL 00000246 (NO,NB,E,BE,NS,PE,GE,LE)</span>
<span class="m g" style="left:2px;top:320px;">ST0 empty </span>
<span class="m rd" style="left:82px;top:320px;">-9.0535128183419217920e-2085</span>
<span class="m g" style="left:2px;top:336px;">ST1 empty </span>
<span class="m rd" style="left:82px;top:336px;">+UNORM 0003 00000010 00000000</span>
</div>
<div style="left:4px;top:443px;width:290px;height:242px;background:#808080"></div>
<div class="cream" style="left:6px;top:445px;width:288px;height:239px;"></div>
<div style="left:6px;top:445px;width:272px;height:239px;overflow:hidden">
<span class="m g" style="left:5px;top:0px;">004E6000</span>
<span class="m g" style="left:77px;top:0px;">00 00 00 00</span>
<span class="m g" style="left:173px;top:0px;">A2 9D 09 33</span>
<div style="left:270px;top:5px;width:1px;height:7px;background:#A0A0A0"></div>
<span class="m g" style="left:5px;top:16px;">004E6010</span>
<span class="m g" style="left:77px;top:16px;">01 00 00 00</span>
<span class="m g" style="left:173px;top:16px;">50 00 00 80</span>
<div style="left:270px;top:21px;width:1px;height:7px;background:#A0A0A0"></div>
<span class="m g" style="left:5px;top:32px;">004E6020</span>
<span class="m g" style="left:77px;top:32px;">03 00 00 00</span>
<span class="m g" style="left:173px;top:32px;">30 07 00 80</span>
<div style="left:270px;top:37px;width:1px;height:7px;background:#A0A0A0"></div>
<span class="m g" style="left:5px;top:48px;">004E6030</span>
<span class="m g" style="left:77px;top:48px;">06 00 00 00</span>
<span class="m g" style="left:173px;top:48px;">50 0A 00 80</span>
<div style="left:270px;top:53px;width:1px;height:7px;background:#A0A0A0"></div>
<span class="m g" style="left:5px;top:64px;">004E6040</span>
<span class="m g" style="left:77px;top:64px;">0C 00 00 00</span>
<span class="m g" style="left:173px;top:64px;">D0 0D 00 80</span>
<div style="left:270px;top:69px;width:1px;height:7px;background:#A0A0A0"></div>
<span class="m g" style="left:5px;top:80px;">004E6050</span>
<span class="m g" style="left:77px;top:80px;">00 00 00 00</span>
<span class="m g" style="left:173px;top:80px;">A2 9D 09 33</span>
<div style="left:270px;top:85px;width:1px;height:7px;background:#A0A0A0"></div>
<span class="m g" style="left:5px;top:96px;">004E6060</span>
<span class="m g" style="left:77px;top:96px;">01 00 00 00</span>
<span class="m g" style="left:173px;top:96px;">98 00 00 80</span>
<div style="left:270px;top:101px;width:1px;height:7px;background:#A0A0A0"></div>
<span class="m g" style="left:5px;top:112px;">004E6070</span>
<span class="m g" style="left:77px;top:112px;">03 00 00 00</span>
<span class="m g" style="left:173px;top:112px;">E8 00 00 80</span>
<div style="left:270px;top:117px;width:1px;height:7px;background:#A0A0A0"></div>
<span class="m g" style="left:5px;top:128px;">004E6080</span>
<span class="m g" style="left:77px;top:128px;">05 00 00 00</span>
<span class="m g" style="left:173px;top:128px;">38 01 00 80</span>
<div style="left:270px;top:133px;width:1px;height:7px;background:#A0A0A0"></div>
<span class="m g" style="left:5px;top:144px;">004E6090</span>
<span class="m g" style="left:77px;top:144px;">07 00 00 00</span>
<span class="m g" style="left:173px;top:144px;">88 01 00 80</span>
<div style="left:270px;top:149px;width:1px;height:7px;background:#A0A0A0"></div>
<span class="m g" style="left:5px;top:160px;">004E60A0</span>
<span class="m g" style="left:77px;top:160px;">00 00 00 00</span>
<span class="m g" style="left:173px;top:160px;">00 00 01 00</span>
<div style="left:270px;top:165px;width:1px;height:7px;background:#A0A0A0"></div>
<span class="m g" style="left:5px;top:176px;">004E60B0</span>
<span class="m g" style="left:77px;top:176px;">28 22 0C 00</span>
<span class="m g" style="left:173px;top:176px;">34 01 00 00</span>
<div style="left:270px;top:181px;width:1px;height:7px;background:#A0A0A0"></div>
<span class="m g" style="left:5px;top:192px;">004E60C0</span>
<span class="m g" style="left:77px;top:192px;">00 00 00 00</span>
<span class="m g" style="left:173px;top:192px;">A2 9D 09 33</span>
<div style="left:270px;top:197px;width:1px;height:7px;background:#A0A0A0"></div>
<span class="m g" style="left:5px;top:208px;">004E60D0</span>
<span class="m g" style="left:77px;top:208px;">00 00 00 00</span>
<span class="m g" style="left:173px;top:208px;">D8 00 00 00</span>
<div style="left:270px;top:213px;width:1px;height:7px;background:#A0A0A0"></div>
<span class="m g" style="left:5px;top:224px;">004E60E0</span>
<span class="m g" style="left:77px;top:224px;">00 00 00 00</span>
<span class="m g" style="left:173px;top:224px;">00 00 00 00</span>
<div style="left:270px;top:229px;width:1px;height:7px;background:#A0A0A0"></div>
<div style="left:71px;top:0px;width:1px;height:239px;background:#C0C0C0"></div>
<div style="left:167px;top:0px;width:1px;height:239px;background:#C0C0C0"></div>
<div style="left:263px;top:0px;width:1px;height:239px;background:#C0C0C0"></div>
</div>
<div style="left:278px;top:445px;width:16px;height:239px;background:linear-gradient(to right,#F0EEE8,#FEFEFB)"></div>
<div style="left:294px;top:443px;width:720px;height:242px;background:#707070"></div>
<div class="cream" style="left:296px;top:445px;width:718px;height:239px;"></div>
<div style="left:296px;top:445px;width:699px;height:238px;overflow:hidden">
<div style="left:0px;top:0px;width:700px;height:16px;background:#A6CAF0"></div>
<div style="left:0px;top:0px;width:71px;height:16px;background:#000"></div>
<span class="m" style="left:5px;top:0px;color:#fff">0012FCE4</span>
<span class="m g" style="left:85px;top:0px;">0012FDDC</span>
<span class="m g" style="left:5px;top:16px;">0012FCE8</span>
<span class="m g" style="left:85px;top:16px;">004AD60D</span>
<span class="m g" style="left:5px;top:32px;">0012FCEC</span>
<span class="m g" style="left:85px;top:32px;">0012FDB8</span>
<span class="m g" style="left:5px;top:48px;">0012FCF0</span>
<span class="m g" style="left:85px;top:48px;">0012FEA0</span>
<span class="m g" style="left:5px;top:64px;">0012FCF4</span>
<span class="m g" style="left:85px;top:64px;">004326F8</span>
<span class="m g" style="left:156px;top:64px;">11.004326F8</span>
<span class="m g" style="left:5px;top:80px;">0012FCF8</span>
<span class="m g" style="left:85px;top:80px;">00A04324</span>
<span class="m g" style="left:5px;top:96px;">0012FCFC</span>
<span class="m g" style="left:85px;top:96px;">00000000</span>
<span class="m g" style="left:5px;top:112px;">0012FD00</span>
<span class="m g" style="left:85px;top:112px;">00000000</span>
<span class="m g" style="left:5px;top:128px;">0012FD04</span>
<span class="m g" style="left:85px;top:128px;">00000000</span>
<span class="m g" style="left:5px;top:144px;">0012FD08</span>
<span class="m g" style="left:85px;top:144px;">00000000</span>
<span class="m g" style="left:5px;top:160px;">0012FD0C</span>
<span class="m g" style="left:85px;top:160px;">00000000</span>
<span class="m g" style="left:5px;top:176px;">0012FD10</span>
<span class="m g" style="left:85px;top:176px;">00000000</span>
<span class="m g" style="left:5px;top:192px;">0012FD14</span>
<span class="m g" style="left:85px;top:192px;">00000000</span>
<span class="m g" style="left:5px;top:208px;">0012FD18</span>
<span class="m g" style="left:85px;top:208px;">00000000</span>
<span class="m g" style="left:5px;top:224px;">0012FD1C</span>
<span class="m g" style="left:85px;top:224px;">00000000</span>
<span class="cj g" style="left:156px;top:0px;font-size:16px;line-height:16px">指向下一个</span>
<span class="m g" style="left:244px;top:0px;">SEH</span>
<span class="cj g" style="left:276px;top:0px;font-size:16px;line-height:16px">记录的指针</span>
<span class="m g" style="left:156px;top:16px;">SE</span>
<span class="cj g" style="left:172px;top:16px;font-size:16px;line-height:16px">处理程序</span>
<div style="left:71px;top:0px;width:1px;height:239px;background:#808080"></div>
<div style="left:151px;top:0px;width:1px;height:239px;background:#808080"></div>
</div>
<div style="left:995px;top:445px;width:17px;height:239px;background:linear-gradient(to right,#F0EEE8,#FEFEFB)"></div>
<div style="left:1012px;top:445px;width:2px;height:239px;background:#909090"></div>
<div style="left:746px;top:75px;width:16px;height:16px;background:#fff"></div><div style="left:747px;top:76px;width:14px;height:14px;background:linear-gradient(135deg,#CAD8FA,#B4C8F6);border-radius:2px;border-bottom:1px solid #9CB0E0;border-right:1px solid #AEC0EC"></div><svg style="position:absolute;left:747px;top:76px" width="14" height="14" viewBox="0 0 14 14"><path d="M3.5 9 L7 5.5 L10.5 9" stroke="#4D6185" stroke-width="2.2" fill="none"/></svg><div style="left:746px;top:173px;width:16px;height:16px;background:#fff"></div><div style="left:747px;top:174px;width:14px;height:14px;background:linear-gradient(to right,#C9D7FB,#B9CBF7);border-radius:2px;border-bottom:1px solid #9CB0E0;border-right:1px solid #AEC0EC"></div><div style="left:750px;top:177px;width:7px;height:1px;background:#EEF4FE"></div><div style="left:751px;top:178px;width:7px;height:1px;background:#8CB0F8"></div><div style="left:750px;top:179px;width:7px;height:1px;background:#EEF4FE"></div><div style="left:751px;top:180px;width:7px;height:1px;background:#8CB0F8"></div><div style="left:750px;top:181px;width:7px;height:1px;background:#EEF4FE"></div><div style="left:751px;top:182px;width:7px;height:1px;background:#8CB0F8"></div><div style="left:750px;top:183px;width:7px;height:1px;background:#EEF4FE"></div><div style="left:751px;top:184px;width:7px;height:1px;background:#8CB0F8"></div><div style="left:746px;top:386px;width:16px;height:16px;background:#fff"></div><div style="left:747px;top:387px;width:14px;height:14px;background:linear-gradient(135deg,#CAD8FA,#B4C8F6);border-radius:2px;border-bottom:1px solid #9CB0E0;border-right:1px solid #AEC0EC"></div><svg style="position:absolute;left:747px;top:387px" width="14" height="14" viewBox="0 0 14 14"><path d="M3.5 5.5 L7 9 L10.5 5.5" stroke="#4D6185" stroke-width="2.2" fill="none"/></svg><div style="left:278px;top:445px;width:16px;height:16px;background:#fff"></div><div style="left:279px;top:446px;width:14px;height:14px;background:linear-gradient(135deg,#CAD8FA,#B4C8F6);border-radius:2px;border-bottom:1px solid #9CB0E0;border-right:1px solid #AEC0EC"></div><svg style="position:absolute;left:279px;top:446px" width="14" height="14" viewBox="0 0 14 14"><path d="M3.5 9 L7 5.5 L10.5 9" stroke="#4D6185" stroke-width="2.2" fill="none"/></svg><div style="left:278px;top:462px;width:16px;height:16px;background:#fff"></div><div style="left:279px;top:463px;width:14px;height:14px;background:linear-gradient(to right,#C9D7FB,#B9CBF7);border-radius:2px;border-bottom:1px solid #9CB0E0;border-right:1px solid #AEC0EC"></div><div style="left:282px;top:466px;width:7px;height:1px;background:#EEF4FE"></div><div style="left:283px;top:467px;width:7px;height:1px;background:#8CB0F8"></div><div style="left:282px;top:468px;width:7px;height:1px;background:#EEF4FE"></div><div style="left:283px;top:469px;width:7px;height:1px;background:#8CB0F8"></div><div style="left:282px;top:470px;width:7px;height:1px;background:#EEF4FE"></div><div style="left:283px;top:471px;width:7px;height:1px;background:#8CB0F8"></div><div style="left:282px;top:472px;width:7px;height:1px;background:#EEF4FE"></div><div style="left:283px;top:473px;width:7px;height:1px;background:#8CB0F8"></div><div style="left:278px;top:666px;width:16px;height:16px;background:#fff"></div><div style="left:279px;top:667px;width:14px;height:14px;background:linear-gradient(135deg,#CAD8FA,#B4C8F6);border-radius:2px;border-bottom:1px solid #9CB0E0;border-right:1px solid #AEC0EC"></div><svg style="position:absolute;left:279px;top:667px" width="14" height="14" viewBox="0 0 14 14"><path d="M3.5 5.5 L7 9 L10.5 5.5" stroke="#4D6185" stroke-width="2.2" fill="none"/></svg><div style="left:995px;top:445px;width:16px;height:16px;background:#fff"></div><div style="left:996px;top:446px;width:14px;height:14px;background:linear-gradient(135deg,#CAD8FA,#B4C8F6);border-radius:2px;border-bottom:1px solid #9CB0E0;border-right:1px solid #AEC0EC"></div><svg style="position:absolute;left:996px;top:446px" width="14" height="14" viewBox="0 0 14 14"><path d="M3.5 9 L7 5.5 L10.5 9" stroke="#4D6185" stroke-width="2.2" fill="none"/></svg><div style="left:995px;top:646px;width:16px;height:16px;background:#fff"></div><div style="left:996px;top:647px;width:14px;height:14px;background:linear-gradient(to right,#C9D7FB,#B9CBF7);border-radius:2px;border-bottom:1px solid #9CB0E0;border-right:1px solid #AEC0EC"></div><div style="left:999px;top:650px;width:7px;height:1px;background:#EEF4FE"></div><div style="left:1000px;top:651px;width:7px;height:1px;background:#8CB0F8"></div><div style="left:999px;top:652px;width:7px;height:1px;background:#EEF4FE"></div><div style="left:1000px;top:653px;width:7px;height:1px;background:#8CB0F8"></div><div style="left:999px;top:654px;width:7px;height:1px;background:#EEF4FE"></div><div style="left:1000px;top:655px;width:7px;height:1px;background:#8CB0F8"></div><div style="left:999px;top:656px;width:7px;height:1px;background:#EEF4FE"></div><div style="left:1000px;top:657px;width:7px;height:1px;background:#8CB0F8"></div><div style="left:995px;top:666px;width:16px;height:16px;background:#fff"></div><div style="left:996px;top:667px;width:14px;height:14px;background:linear-gradient(135deg,#CAD8FA,#B4C8F6);border-radius:2px;border-bottom:1px solid #9CB0E0;border-right:1px solid #AEC0EC"></div><svg style="position:absolute;left:996px;top:667px" width="14" height="14" viewBox="0 0 14 14"><path d="M3.5 5.5 L7 9 L10.5 5.5" stroke="#4D6185" stroke-width="2.2" fill="none"/></svg>
<div style="left:4px;top:683px;width:1010px;height:2px;background:#808080"></div>
<div style="left:4px;top:685px;width:1010px;height:27px;background:#ECE9D8"></div>
<span style="left:10px;top:693px;font-size:12px;letter-spacing:-0.3px;line-height:14px;font-family:'Liberation Sans',sans-serif">Command</span>
<div style="left:67px;top:689px;width:198px;height:21px;background:#fff;border:1px solid #808080;border-right-color:#fff;border-bottom-color:#fff"></div>
<div style="left:68px;top:690px;width:196px;height:19px;border:1px solid #404040;border-right-color:#D4D0C8;border-bottom-color:#D4D0C8"></div>
<div style="left:69px;top:691px;width:95px;height:15px;background:#316AC5"></div>
<span style="left:70px;top:692px;font-size:12px;line-height:14px;color:#fff;font-family:'Liberation Sans',sans-serif">bp MessageBoxA</span>
<div style="left:246px;top:691px;width:17px;height:17px;background:#ECE9D8;border:1px solid #fff;border-right-color:#808080;border-bottom-color:#808080"></div>
<svg style="position:absolute;left:251px;top:697px" width="7" height="4" viewBox="0 0 7 4"><path d="M0 0 L7 0 L3.5 4 Z" fill="#000"/></svg>
<div style="left:4px;top:711px;width:1010px;height:19px;background:#C0C0C0"></div>
<div style="left:4px;top:711px;width:1010px;height:1px;background:#fff"></div>
<div style="left:4px;top:712px;width:1010px;height:1px;background:#808080"></div>
<span style="left:9px;top:713px;font-size:14px;letter-spacing:-1.4px;line-height:15px;color:#000;font-family:'Liberation Mono',monospace"><span class="cj" style="position:static;font-size:13px;letter-spacing:0">起始</span>:4E6000 <span class="cj" style="position:static;font-size:13px;letter-spacing:0">结束</span>:4E5FFF <span class="cj" style="position:static;font-size:13px;letter-spacing:0">当前值</span>:0</span>
<div style="left:4px;top:728px;width:1010px;height:2px;background:#fff"></div>
<div style="left:969px;top:712px;width:2px;height:18px;background:#fff"></div>
<div style="left:971px;top:712px;width:1px;height:17px;background:#808080"></div>
<div style="left:1012px;top:712px;width:2px;height:18px;background:#fff"></div>
</body></html>
